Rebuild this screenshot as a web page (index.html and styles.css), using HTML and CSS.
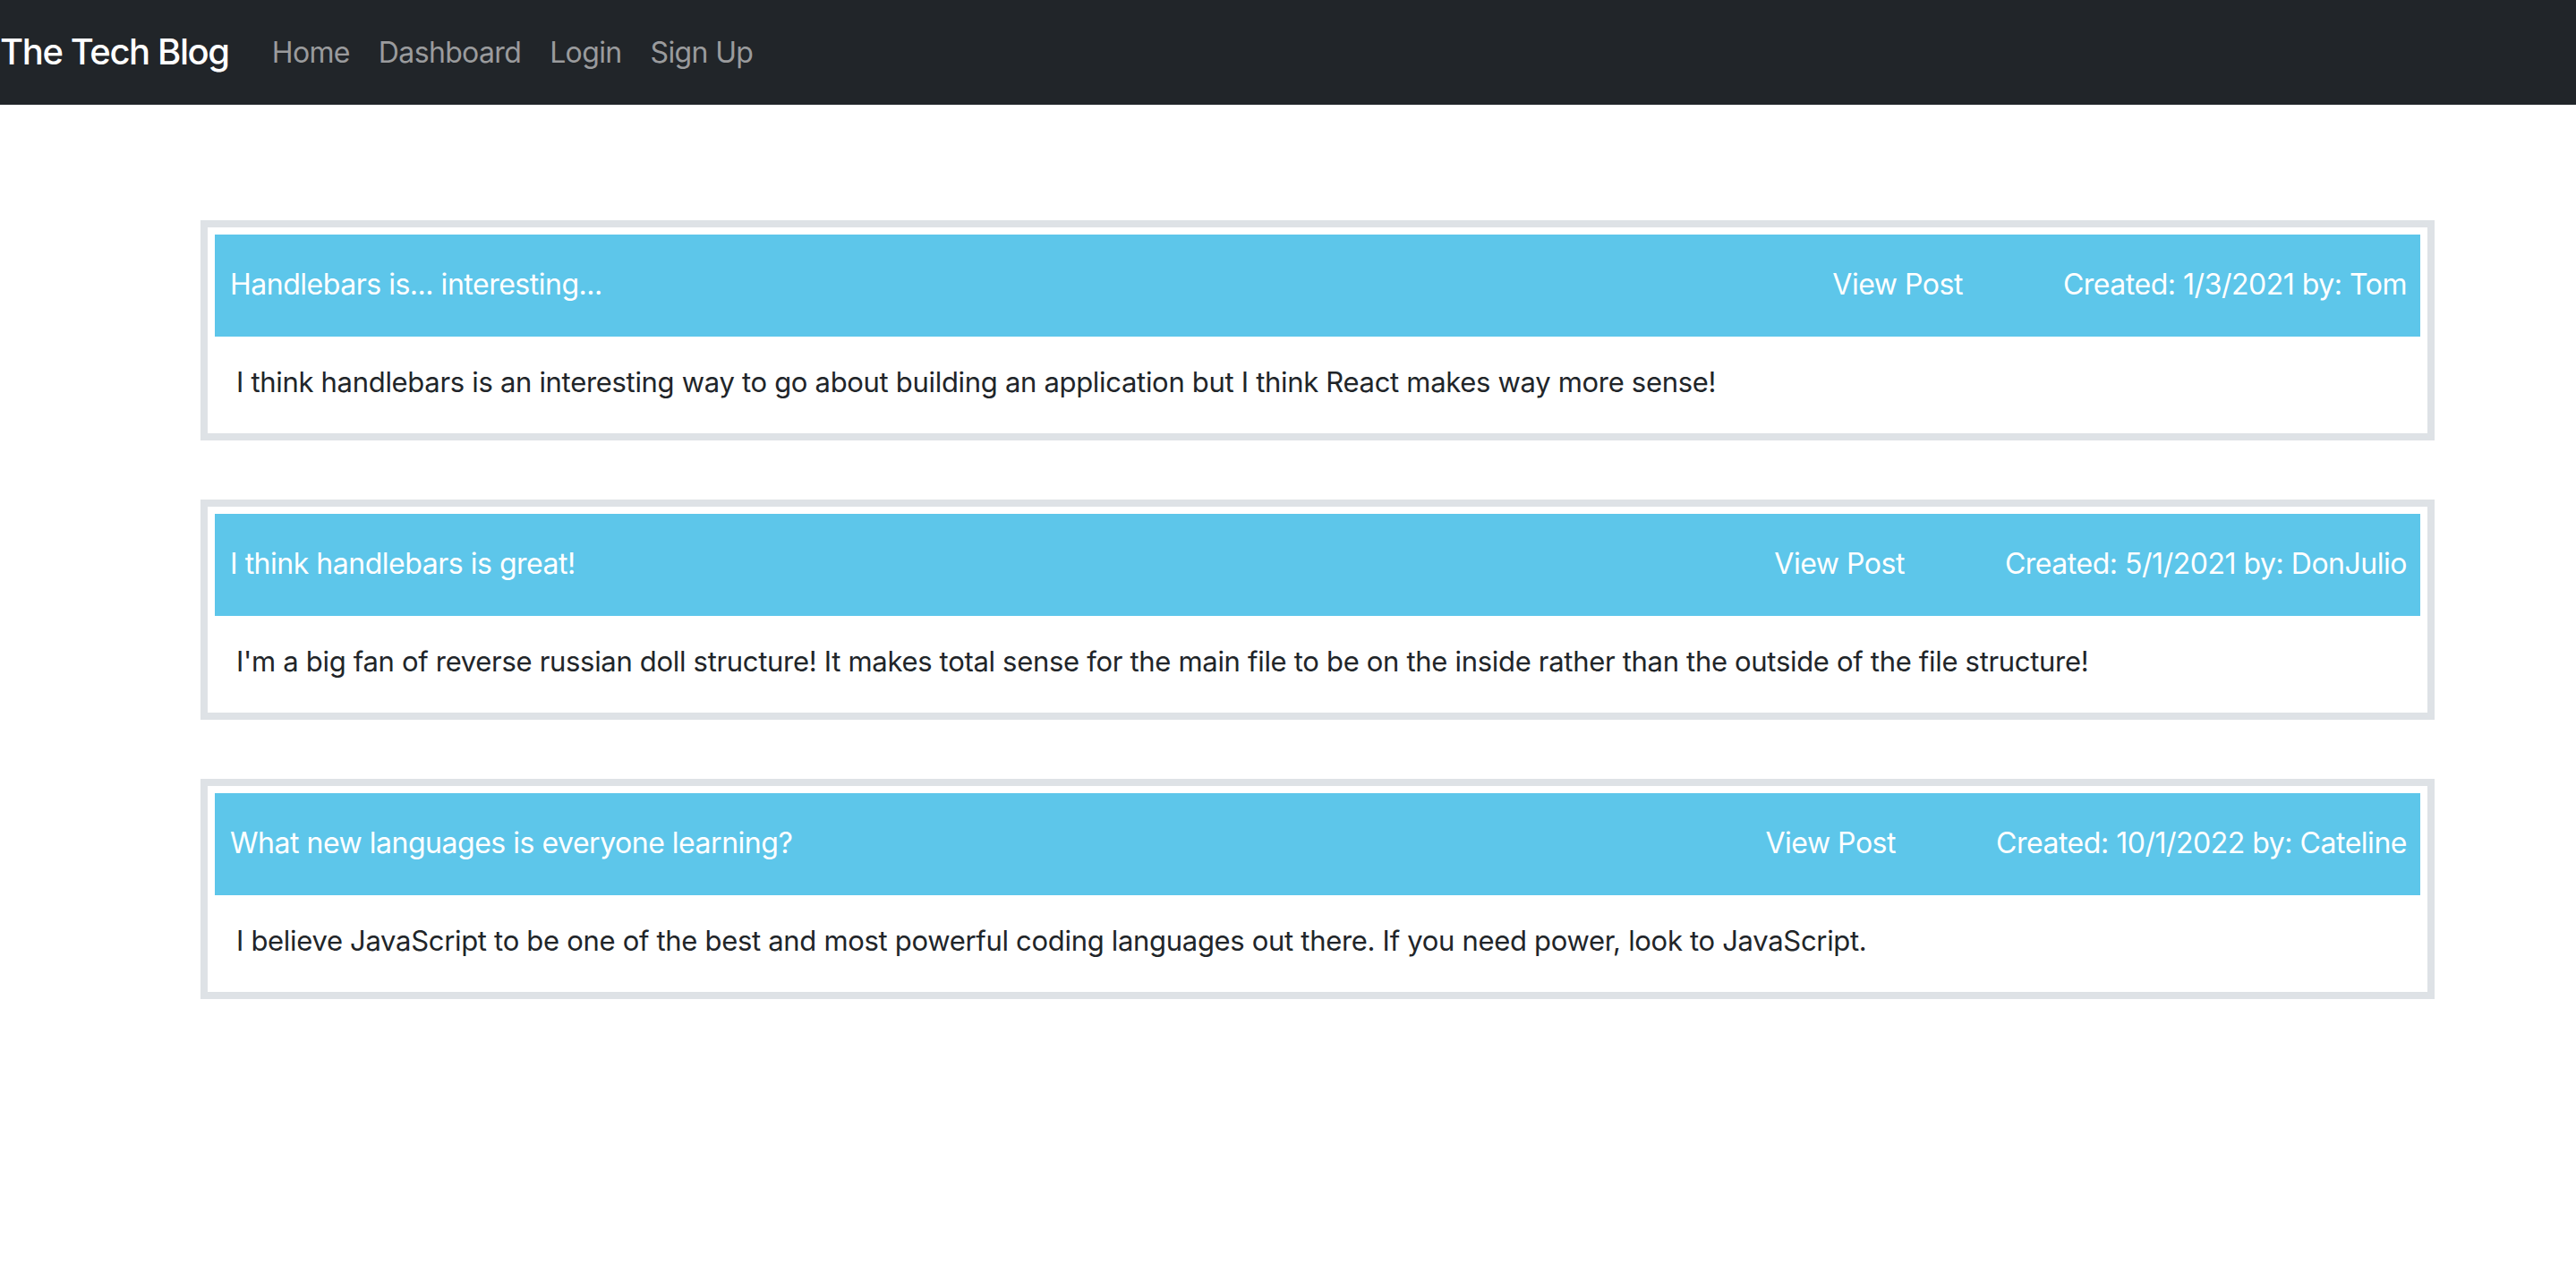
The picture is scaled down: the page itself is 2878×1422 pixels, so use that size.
FILE: index.html
```html
<!DOCTYPE html>
<html lang="en">
<head>
<meta charset="utf-8">
<title>The Tech Blog</title>
<link rel="stylesheet" href="styles.css">
</head>
<body>
<nav class="navbar">
  <a class="brand" href="#">The Tech Blog</a>
  <ul class="nav">
    <li><a class="nav-link" href="#">Home</a></li>
    <li><a class="nav-link" href="#">Dashboard</a></li>
    <li><a class="nav-link" href="#">Login</a></li>
    <li><a class="nav-link" href="#">Sign Up</a></li>
  </ul>
</nav>
<main class="posts">
  <article class="card">
    <header class="card-head">
      <h2 class="card-title">Handlebars is... interesting...</h2>
      <div class="meta">
        <a class="view" href="#">View Post</a>
        <span class="created">Created: 1/3/2021 by: Tom</span>
      </div>
    </header>
    <p class="card-body">I think handlebars is an interesting way to go about building an application but I think React makes way more sense!</p>
  </article>
  <article class="card">
    <header class="card-head">
      <h2 class="card-title">I think handlebars is great!</h2>
      <div class="meta">
        <a class="view" href="#">View Post</a>
        <span class="created">Created: 5/1/2021 by: DonJulio</span>
      </div>
    </header>
    <p class="card-body">I'm a big fan of reverse russian doll structure! It makes total sense for the main file to be on the inside rather than the outside of the file structure!</p>
  </article>
  <article class="card">
    <header class="card-head">
      <h2 class="card-title">What new languages is everyone learning?</h2>
      <div class="meta">
        <a class="view" href="#">View Post</a>
        <span class="created">Created: 10/1/2022 by: Cateline</span>
      </div>
    </header>
    <p class="card-body">I believe JavaScript to be one of the best and most powerful coding languages out there. If you need power, look to JavaScript.</p>
  </article>
</main>
</body>
</html>
```
FILE: styles.css
```css
* { box-sizing: border-box; }
body {
  margin: 0;
  font-family: Inter, "Liberation Sans", Arial, sans-serif;
  color: #212529;
  background: #fff;
}
a { text-decoration: none; }
.navbar {
  height: 117px;
  background: #212529;
  display: flex;
  align-items: center;
}
.brand {
  color: #fff;
  font-size: 40px;
  font-weight: 500;
  margin-right: 32px;
  line-height: 1.5;
  letter-spacing: -0.035em;
  margin-top: -2px;
}
.nav {
  list-style: none;
  margin: 0;
  padding: 0;
  display: flex;
}
.nav-link {
  display: block;
  padding: 0 16px;
  font-size: 32px;
  color: #9a9b9d;
  line-height: 1.5;
  letter-spacing: -0.02em;
}
.posts {
  margin-left: 224px;
  width: 2496px;
  padding-top: 129px;
  display: flex;
  flex-direction: column;
  gap: 66px;
}
.card {
  border: 8px solid #dee2e6;
  padding: 8px;
}
.card-head {
  height: 114px;
  background: #5dc6ea;
  color: #fff;
  display: flex;
  align-items: center;
  justify-content: space-between;
  padding: 0 15px 4px 17px;
  letter-spacing: -0.03em;
}
.card-title {
  margin: 0;
  font-size: 32px;
  font-weight: 400;
}
.meta {
  display: flex;
  gap: 112px;
  font-size: 32px;
}
.view { color: #fff; }
.card-body {
  margin: 0;
  height: 100px;
  display: flex;
  align-items: center;
  padding-left: 24px;
  font-size: 31px;
  letter-spacing: -0.01em;
}
```
